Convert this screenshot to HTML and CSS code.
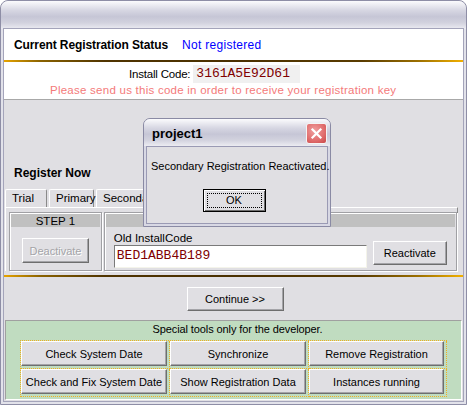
FILE: index.html
```html
<!DOCTYPE html>
<html>
<head>
<meta charset="utf-8">
<link rel="stylesheet" href="styles.css">
</head>
<body>
<div class="window">
  <div class="titlebar"></div>
  <div class="client">
    <div class="status-row">
      <span class="status-label">Current Registration Status</span>
      <span class="status-value">Not registered</span>
    </div>
    <div class="gold-line"></div>
    <div class="install">
      <div class="install-row">
        <span class="install-label">Install Code:</span>
        <span class="install-code">3161A5E92D61</span>
      </div>
      <div class="install-note">Please send us this code in order to receive your registration key</div>
    </div>
    <div class="main">
      <div class="register-title">Register Now</div>
      <div class="tabs">
        <div class="tab tab-trial">Trial</div>
        <div class="tab tab-primary">Primary</div>
        <div class="tab tab-secondary">Secondary</div>
      </div>
      <div class="tab-panel">
        <div class="group group-step">
          <div class="group-head">STEP 1</div>
          <div class="group-body step-body">
            <button class="btn btn-disabled" disabled>Deactivate</button>
          </div>
        </div>
        <div class="group group-old">
          <div class="group-head"></div>
          <div class="group-body old-body">
            <div class="field">
              <div class="field-label">Old InstallCode</div>
              <div class="input">BED1ABB4B189</div>
            </div>
            <button class="btn btn-reactivate">Reactivate</button>
          </div>
        </div>
      </div>
      <div class="gold-line gold-line-lower"></div>
      <div class="continue-row">
        <button class="btn btn-continue">Continue &gt;&gt;</button>
      </div>
      <div class="dev-panel">
        <div class="dev-title">Special tools only for the developer.</div>
        <div class="dev-grid">
          <div class="cell"><button class="btn">Check System Date</button></div>
          <div class="cell"><button class="btn">Synchronize</button></div>
          <div class="cell"><button class="btn">Remove Registration</button></div>
          <div class="cell"><button class="btn">Check and Fix System Date</button></div>
          <div class="cell"><button class="btn">Show Registration Data</button></div>
          <div class="cell"><button class="btn">Instances running</button></div>
        </div>
      </div>
    </div>
  </div>

  <div class="dialog">
    <div class="dialog-title">
      <span class="dialog-caption">project1</span>
      <span class="close-btn">
        <svg width="13" height="13" viewBox="0 0 13 13"><path d="M2.5 2.5 L10.5 10.5 M10.5 2.5 L2.5 10.5" stroke="#fff" stroke-width="2.2" stroke-linecap="square"/></svg>
      </span>
    </div>
    <div class="dialog-body">
      <div class="dialog-msg">Secondary Registration Reactivated.</div>
      <div class="dialog-actions">
        <button class="btn btn-ok"><span class="focus">OK</span></button>
      </div>
    </div>
  </div>
</div>
</body>
</html>
```

FILE: styles.css
```css
html, body {
  margin: 0;
  padding: 0;
  background: #ffffff;
}

body {
  font-family: "Liberation Sans", Arial, sans-serif;
  font-size: 11px;
  color: #000;
}

.window {
  position: relative;
  width: 467px;
  height: 405px;
  box-sizing: border-box;
  border: 1px solid #8e8ea6;
  border-radius: 8px 8px 0 0;
  padding: 0 3px 3px 3px;
  background: #e2e2ea;
  display: flex;
  flex-direction: column;
  overflow: hidden;
}

.titlebar {
  height: 28px;
  margin: 0 -3px;
  border-radius: 7px 7px 0 0;
  background: linear-gradient(#fbfbfd 0%, #ececf2 14%, #d6d6e2 34%, #c6c6d6 56%, #d2d2de 78%, #ececf2 100%);
  flex: none;
}

.client {
  width: 459px;
  height: 372px;
  box-shadow: 0 0 0 1px #a4a4ba;
  background: #e0dfe3;
  display: flex;
  flex-direction: column;
  flex: none;
}

/* status */
.status-row {
  height: 31px;
  background: #fff;
  display: flex;
  align-items: center;
  padding-left: 10px;
  box-sizing: border-box;
}

.status-label {
  font-weight: bold;
  font-size: 12px;
  width: 168px;
  white-space: nowrap;
  letter-spacing: -0.1px;
}

.status-value {
  color: #0000ff;
  font-size: 12px;
  letter-spacing: 0.3px;
}

.gold-line {
  height: 2px;
  flex: none;
  background: linear-gradient(to right, #e7a400 0%, #8a6200 8%, #503400 22%, #4a3000 50%, #5a3c00 78%, #9a6e00 90%, #f2b000 100%);
}

.install {
  height: 37px;
  background: #fff;
  border-bottom: 1px solid #a8a8a8;
  display: flex;
  flex-direction: column;
  align-items: flex-start;
  flex: none;
}

.install-row {
  display: flex;
  align-items: center;
  margin-top: 3px;
  padding-left: 125px;
  height: 18px;
}

.install-label {
  font-size: 11.5px;
  margin-right: 3px;
  white-space: nowrap;
  letter-spacing: -0.2px;
}

.install-code {
  font-family: "Liberation Mono", "Courier New", monospace;
  font-size: 13px;
  color: #800000;
  background: #f0f0f0;
  height: 18px;
  line-height: 18px;
  width: 104px;
  padding-left: 3px;
}

.install-note {
  color: #f47a7a;
  font-size: 11.5px;
  padding-left: 46px;
  margin-top: 1px;
  letter-spacing: 0.25px;
  white-space: nowrap;
}

/* main gray */
.main {
  flex: 1;
  display: flex;
  flex-direction: column;
  background: #e0dfe3;
}

.register-title {
  font-weight: bold;
  font-size: 12px;
  padding-left: 10px;
  margin-top: 65px;
  height: 16px;
  line-height: 16px;
}

.tabs {
  display: flex;
  margin-top: 8px;
  padding-left: 1px;
  height: 18px;
  gap: 2px;
}

.tab {
  height: 18px;
  box-sizing: border-box;
  border-top: 1px solid #fff;
  border-left: 1px solid #fff;
  border-right: 1px solid #8a8a8a;
  border-radius: 2px 2px 0 0;
  padding: 1px 0 0 6px;
  line-height: 15px;
  font-size: 11.5px;
}

.tab-trial { width: 42px; }
.tab-primary { width: 45px; }
.tab-secondary { width: 80px; }

.tab-panel {
  margin-left: 1px;
  width: 453px;
  height: 64px;
  box-sizing: border-box;
  border-top: 1px solid #fff;
  border-left: 1px solid #fff;
  border-right: 1px solid #8a8a8a;
  display: flex;
  gap: 2px;
  padding: 4px 0 0 3px;
}

.group {
  box-sizing: border-box;
  height: 59px;
  border: 1px solid #a0a0a4;
  box-shadow: inset 1px 1px 0 #fff, 1px 1px 0 #fff;
  display: flex;
  flex-direction: column;
}

.group-step { width: 93px; }
.group-old { width: 354px; }

.group-head {
  height: 13px;
  margin: 1px 1px 0 1px;
  background: #c0c0c0;
  text-align: center;
  font-size: 11.5px;
  line-height: 14px;
}

.step-body {
  padding: 11px 0 0 12px;
}

.old-body {
  display: flex;
  align-items: flex-end;
  padding: 0 0 0 9px;
  gap: 6px;
}

.field-label {
  font-size: 11.5px;
  height: 14px;
  line-height: 14px;
  margin-top: 4px;
}

.input {
  width: 253px;
  height: 23px;
  box-sizing: border-box;
  background: #fff;
  border: 1px solid;
  border-color: #7a7a7a #f4f4ea #f4f4ea #7a7a7a;
  font-family: "Liberation Mono", "Courier New", monospace;
  font-size: 13px;
  color: #800000;
  line-height: 20px;
  padding-left: 2px;
}

.btn {
  font-family: "Liberation Sans", Arial, sans-serif;
  font-size: 11px;
  color: #000;
  background: #e0dfe3;
  border: 1px solid;
  border-color: #ffffff #6e6e6e #6e6e6e #ffffff;
  box-shadow: inset -1px -1px 0 #a4a4a8;
  padding: 0;
  margin: 0;
  box-sizing: border-box;
  height: 24px;
  white-space: nowrap;
}

.btn-disabled {
  width: 67px;
  height: 25px;
  color: #a4a4a8;
  text-shadow: 1px 1px 0 #fff;
}

.btn-reactivate {
  width: 74px;
  height: 24px;
  margin-bottom: 3px;
}

.gold-line-lower {
  margin-top: 4px;
  height: 2px;
}

.continue-row {
  display: flex;
  justify-content: center;
  padding-top: 10px;
  height: 34px;
  box-sizing: border-box;
  padding-left: 3px;
}

.btn-continue {
  width: 97px;
  height: 24px;
}

/* developer panel */
.dev-panel {
  margin: 9px 0 0 1px;
  width: 457px;
  height: 80px;
  box-sizing: border-box;
  background: #c0dcc0;
  border: 1px solid;
  border-color: #a0a0a0 #ffffff #ffffff #a0a0a0;
  display: flex;
  flex-direction: column;
}

.dev-title {
  text-align: center;
  font-size: 11px;
  height: 19px;
  line-height: 17px;
  padding-left: 8px;
  letter-spacing: -0.1px;
}

.dev-grid {
  margin-left: 14px;
  display: grid;
  grid-template-columns: 149px 139px 138px;
  grid-template-rows: 28px 28px;
  width: 427px;
  border-top: 1px dotted #f0b020;
  border-left: 1px dotted #f0b020;
  box-sizing: border-box;
}

.cell {
  border-right: 1px dotted #f0b020;
  border-bottom: 1px dotted #f0b020;
  padding: 0 2px 2px 0;
  display: flex;
}

.cell .btn {
  flex: 1;
  height: 25px;
}

/* dialog */
.dialog {
  position: absolute;
  left: 142px;
  top: 117px;
  width: 188px;
  height: 109px;
  box-sizing: border-box;
  border: 1px solid #8a8aa4;
  border-radius: 7px 7px 0 0;
  background: #d8d8e4;
  padding: 0 2px 2px 2px;
  display: flex;
  flex-direction: column;
}

.dialog-title {
  height: 27px;
  margin: 0 -2px;
  border-radius: 6px 6px 0 0;
  background: linear-gradient(#fbfbfd 0%, #ececf2 14%, #d6d6e2 34%, #c6c6d6 56%, #d2d2de 78%, #ececf2 100%);
  display: flex;
  align-items: center;
  justify-content: space-between;
  padding: 0 3px 0 8px;
  flex: none;
}

.dialog-caption {
  font-family: "Liberation Sans", Arial, sans-serif;
  font-weight: bold;
  font-size: 13px;
  margin-top: 2px;
}

.close-btn {
  width: 21px;
  height: 21px;
  box-sizing: border-box;
  border: 1px solid #f4f4f4;
  border-radius: 3px;
  background: radial-gradient(circle at 40% 35%, #f0a0a0 0%, #e06c6c 60%, #c84848 100%);
  display: flex;
  align-items: center;
  justify-content: center;
  margin-top: 2px;
}

.dialog-body {
  flex: 1;
  background: #e0dfe3;
  border: 1px solid #9a9ab4;
  display: flex;
  flex-direction: column;
}

.dialog-msg {
  padding: 12px 0 0 4px;
  height: 15px;
  line-height: 15px;
  font-size: 11px;
  white-space: nowrap;
}

.dialog-actions {
  display: flex;
  justify-content: center;
  padding-top: 15px;
  padding-right: 6px;
}

.btn-ok {
  width: 63px;
  height: 23px;
  border: 1px solid #000;
  box-shadow: inset 1px 1px 0 #fff, inset -1px -1px 0 #6e6e6e;
  padding: 3px;
  display: flex;
}

.focus {
  flex: 1;
  border: 1px dotted #000;
  line-height: 13px;
  text-align: center;
}
```
